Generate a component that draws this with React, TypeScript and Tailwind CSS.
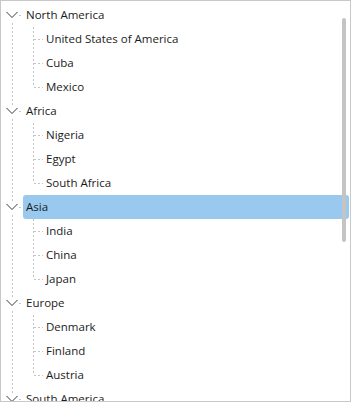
import React from 'react'

type Node = { label: string; children: string[] }

const tree: Node[] = [
  { label: 'North America', children: ['United States of America', 'Cuba', 'Mexico'] },
  { label: 'Africa', children: ['Nigeria', 'Egypt', 'South Africa'] },
  { label: 'Asia', children: ['India', 'China', 'Japan'] },
  { label: 'Europe', children: ['Denmark', 'Finland', 'Austria'] },
  { label: 'South America', children: ['Brazil', 'Argentina', 'Chile'] },
]

const selected = 'Asia'

// dotted connector lines
const vLine = 'w-px bg-[repeating-linear-gradient(to_bottom,#c6c6c6_0_2px,transparent_2px_4px)]'
const hLine = 'h-px bg-[repeating-linear-gradient(to_right,#c6c6c6_0_2px,transparent_2px_4px)]'

function Chevron() {
  return (
    <svg width="12" height="12" viewBox="0 0 12 12" className="relative bg-white">
      <path d="M0.5 3 L6 8.5 L11.5 3" fill="none" stroke="#3a3a3a" strokeWidth="1" />
    </svg>
  )
}

function ParentRow({ label, first }: { label: string; first: boolean }) {
  const active = label === selected
  return (
    <div className="flex h-6 items-stretch">
      <div className="relative flex w-[22px] shrink-0 items-center">
        <div className={`absolute bottom-0 left-[11px] ${first ? 'top-1/2' : 'top-0'} ${vLine}`} />
        <div className="relative ml-[5px]">
          <Chevron />
        </div>
        <div className={`ml-px w-[4px] ${hLine}`} />
      </div>
      <div
        className={`flex flex-1 items-center rounded-[3px] pl-[3px] ${active ? 'bg-[#99c9ef]' : ''}`}
      >
        {label}
      </div>
    </div>
  )
}

function ChildRow({ label, last }: { label: string; last: boolean }) {
  return (
    <div className="flex h-6 items-stretch">
      <div className="relative w-[22px] shrink-0">
        <div className={`absolute inset-y-0 left-[11px] ${vLine}`} />
      </div>
      <div className="relative flex w-[20px] shrink-0 items-center">
        <div className={`absolute left-[10px] top-0 ${last ? 'h-1/2' : 'bottom-0'} ${vLine}`} />
        <div className={`ml-[11px] w-[10px] ${hLine}`} />
      </div>
      <div className="flex flex-1 items-center rounded-[3px] pl-[3px]">{label}</div>
    </div>
  )
}

export default function App() {
  return (
    <div className="relative h-[402px] w-[351px] overflow-hidden border border-[#c8c8c8] bg-white font-['Segoe_UI','Open_Sans',sans-serif] text-[11.5px] text-[#1b1b1b]">
      <div className="flex flex-col pt-[2px] pr-px">
        {tree.map((n, gi) => (
          <div key={n.label} className="flex flex-col">
            <ParentRow label={n.label} first={gi === 0} />
            {n.children.map((c, i) => (
              <ChildRow key={c} label={c} last={i === n.children.length - 1} />
            ))}
          </div>
        ))}
      </div>
      {/* overlay scrollbar thumb */}
      <div className="absolute right-[4px] top-[17px] h-[224px] w-[4px] rounded-full bg-[#c4c4c4]" />
    </div>
  )
}
